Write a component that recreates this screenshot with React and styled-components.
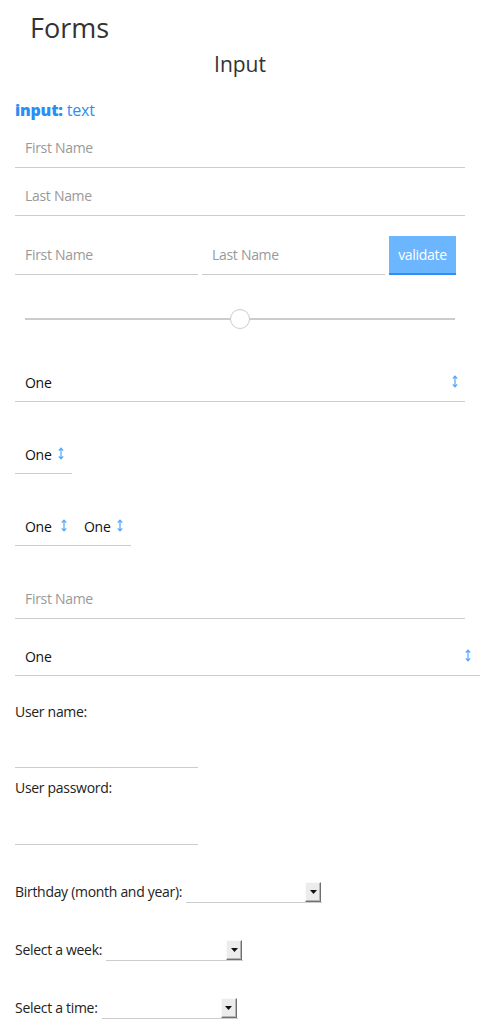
import React from 'react'
import styled, { createGlobalStyle } from 'styled-components'

const GlobalStyle = createGlobalStyle`
  body {
    margin: 0;
    background: #fff;
    font-family: "Open Sans", "Liberation Sans", sans-serif;
    color: #222;
  }
  * { box-sizing: border-box; }
`

const Page = styled.div`
  width: 480px;
  padding: 10px 15px 0;
`

const Title = styled.h1`
  margin: 0 0 0 15px;
  font-size: 27px;
  line-height: 36px;
  font-weight: 400;
  color: #333;
`

const Subtitle = styled.h2`
  margin: 4px 0 0;
  text-align: center;
  font-size: 21px;
  line-height: 28px;
  font-weight: 400;
  color: #333;
`

const SectionHead = styled.h3`
  margin: 22px 0 0;
  font-size: 16px;
  line-height: 20px;
  font-weight: 400;
  letter-spacing: -0.2px;
  color: #2b8ef2;
  b { font-weight: 800; }
`

const TextInput = styled.input`
  display: block;
  width: ${p => p.$width || '100%'};
  height: 40px;
  margin-top: ${p => (p.$mt ?? 8)}px;
  padding: 0 10px;
  border: none;
  border-bottom: 1px solid #ccc;
  border-radius: 0;
  background: transparent;
  font: 14px "Open Sans", sans-serif;
  letter-spacing: -0.3px;
  color: #222;
  outline: none;
  &::placeholder { color: #999; }
`

const Row = styled.div`
  display: flex;
  align-items: flex-end;
  gap: 4px;
  margin-top: 19px;
`

const ValidateButton = styled.button`
  width: 67px;
  height: 39px;
  padding: 0;
  border: none;
  border-bottom: 2px solid #2d8ff5;
  background: #6cb6ff;
  color: #fff;
  font: 14px "Open Sans", sans-serif;
  letter-spacing: -0.3px;
`

const Range = styled.input`
  display: block;
  -webkit-appearance: none;
  appearance: none;
  width: 430px;
  height: 20px;
  margin: 34px 10px 0;
  background: transparent;
  &::-webkit-slider-runnable-track {
    height: 2px;
    background: #ccc;
  }
  &::-webkit-slider-thumb {
    -webkit-appearance: none;
    width: 20px;
    height: 20px;
    margin-top: -9px;
    border-radius: 50%;
    border: 1px solid #ccc;
    background: #fff;
  }
`

const SelectWrap = styled.div`
  position: relative;
  width: ${p => p.$width || 'fit-content'};
  margin-top: ${p => p.$mt || 0}px;
  margin-right: ${p => p.$mr || 0}px;
  border-bottom: ${p => (p.$bare ? 'none' : '1px solid #ccc')};
`

const Select = styled.select`
  display: block;
  -webkit-appearance: none;
  appearance: none;
  width: ${p => (p.$full ? '100%' : 'auto')};
  height: 39px;
  padding: 2px ${p => p.$pr || 20}px 0 10px;
  border: none;
  border-radius: 0;
  background: transparent;
  font: 14px "Open Sans", sans-serif;
  letter-spacing: -0.3px;
  color: #111;
  outline: none;
`

const ArrowIcon = styled.svg`
  position: absolute;
  top: 50%;
  right: ${p => p.$right || 8}px;
  margin-top: -7px;
  pointer-events: none;
`

const SelectPair = styled.div`
  display: flex;
  width: fit-content;
  margin-top: 32px;
  border-bottom: 1px solid #ccc;
`

const FieldLabel = styled.label`
  display: block;
  margin-top: ${p => p.$mt}px;
  font-size: 14px;
  line-height: 19px;
  letter-spacing: -0.3px;
  color: #222;
`

const DateRow = styled.div`
  display: flex;
  gap: 4px;
  margin-top: 37px;
  font-size: 14px;
  line-height: 19px;
  letter-spacing: -0.3px;
  color: #222;
`

const DateField = styled.div`
  display: flex;
  justify-content: flex-end;
  width: ${p => p.$width}px;
  height: 21px;
  padding-right: 1px;
  border-bottom: 1px solid #ccc;
`

const DropButton = styled.span`
  display: flex;
  align-items: center;
  justify-content: center;
  width: 16px;
  height: 20px;
  background: #ececec;
  border-top: 1px solid #fafafa;
  border-left: 1px solid #fafafa;
  border-right: 1px solid #6f6f6f;
  border-bottom: 1px solid #6f6f6f;
  box-shadow: inset -1px -1px 0 #b5b5b5;
`

const Arrow = ({ right }) => (
  <ArrowIcon $right={right} width="6" height="13" viewBox="0 0 6 13">
    <path d="M3 1.5V11.5M0.8 3.6L3 1.2L5.2 3.6M0.8 9.4L3 11.8L5.2 9.4" fill="none" stroke="#4da6ff" strokeWidth="1.2" />
  </ArrowIcon>
)

const Caret = () => (
  <svg width="7" height="4" viewBox="0 0 7 4">
    <polygon points="0,0 7,0 3.5,4" fill="#111" />
  </svg>
)

const OneSelect = ({ pr, right = 8, ...rest }) => (
  <SelectWrap {...rest}>
    <Select $pr={pr} $full={!!rest.$width}>
      <option>One</option>
    </Select>
    <Arrow right={right} />
  </SelectWrap>
)

const DatePicker = ({ label, width }) => (
  <DateRow>
    <span>{label}</span>
    <DateField $width={width}>
      <DropButton><Caret /></DropButton>
    </DateField>
  </DateRow>
)

export default function App() {
  return (
    <Page>
      <GlobalStyle />
      <Title>Forms</Title>
      <Subtitle>Input</Subtitle>
      <SectionHead><b>input:</b> text</SectionHead>

      <TextInput placeholder="First Name" />
      <TextInput placeholder="Last Name" />

      <Row>
        <TextInput $mt={0} $width="183px" placeholder="First Name" />
        <TextInput $mt={0} $width="183px" placeholder="Last Name" />
        <ValidateButton>validate</ValidateButton>
      </Row>

      <Range type="range" min="0" max="100" defaultValue="50" />

      <OneSelect $width="100%" $mt={33} right={7} />
      <OneSelect $mt={32} />

      <SelectPair>
        <OneSelect $bare pr={22} right={7} />
        <OneSelect $bare />
      </SelectPair>

      <TextInput $mt={33} placeholder="First Name" />
      <OneSelect $width="calc(100% + 15px)" $mt={17} $mr={-15} right={9} />

      <FieldLabel $mt={26}>User name:</FieldLabel>
      <TextInput $mt={7} $width="183px" />
      <FieldLabel $mt={10}>User password:</FieldLabel>
      <TextInput $mt={8} $width="183px" type="password" />

      <DatePicker label="Birthday (month and year):" width={136} />
      <DatePicker label="Select a week:" width={137} />
      <DatePicker label="Select a time:" width={136} />
    </Page>
  )
}
